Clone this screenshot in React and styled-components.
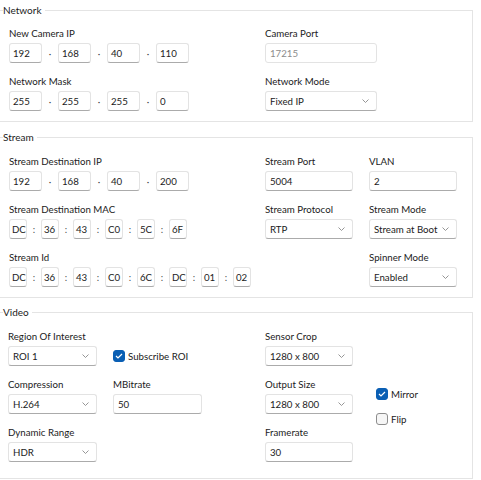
import React from 'react';
import styled, { createGlobalStyle } from 'styled-components';

const GlobalStyle = createGlobalStyle`
  html, body {
    margin: 0;
    padding: 0;
    background: #ffffff;
  }
  body {
    font-family: 'Lato', 'Open Sans', sans-serif;
    font-size: 9.7px;
    color: #1b1b1b;
    overflow: hidden;
  }
`;

const Page = styled.div`
  width: 481px;
  height: 480px;
  padding-top: 2px;
  box-sizing: border-box;
  overflow: hidden;
`;

const GroupBox = styled.fieldset`
  width: 474px;
  box-sizing: border-box;
  margin: 0 0 ${(p) => p.$gap ?? 7}px -1px;
  padding: 0;
  border: 1px solid #e4e4e4;
  min-width: 0;
`;

const Legend = styled.legend`
  margin-left: 3px;
  padding: 0 3px 0 0;
  font-size: 10px;
  line-height: 16px;
  color: #1b1b1b;
`;

const GroupBody = styled.div`
  display: grid;
  grid-template-columns: ${(p) => p.$cols};
  row-gap: 10px;
  padding: ${(p) => p.$pad};
`;

const Field = styled.div`
  display: flex;
  flex-direction: column;
  gap: 1px;
  grid-column: ${(p) => p.$col || 'auto'};
  grid-row: ${(p) => p.$row || 'auto'};
`;

const Label = styled.div`
  line-height: 17px;
  font-size: 9.7px;
  color: #1b1b1b;
  white-space: nowrap;
`;

const Box = styled.div`
  box-sizing: border-box;
  height: 20px;
  width: ${(p) => p.$w}px;
  flex: none;
  display: flex;
  align-items: center;
  padding: 0 0 0 ${(p) => p.$padL ?? 4}px;
  background: #ffffff;
  border: 1px solid #e3e3e3;
  border-bottom-color: ${(p) => (p.$disabled ? '#e3e3e3' : '#ababab')};
  border-radius: 3px;
  color: ${(p) => (p.$disabled ? '#8c8c8c' : '#1b1b1b')};
  font-size: 9.7px;
  white-space: nowrap;
  overflow: hidden;
`;

const ComboBox = styled(Box)`
  justify-content: space-between;
  padding-right: 7px;
`;

const Segments = styled.div`
  display: flex;
  align-items: center;
`;

const Sep = styled.span`
  width: ${(p) => p.$w}px;
  flex: none;
  text-align: center;
  color: #4a4a4a;
  font-size: 9.7px;
`;

const CheckCell = styled.div`
  grid-column: ${(p) => p.$col};
  grid-row: ${(p) => p.$row};
  align-self: ${(p) => p.$align || 'end'};
  display: flex;
  flex-direction: column;
  gap: 9px;
  padding-top: ${(p) => p.$padTop || 0}px;
  height: ${(p) => (p.$align === 'start' ? 'auto' : '20px')};
  justify-content: center;
`;

const CheckRow = styled.label`
  display: flex;
  align-items: center;
  gap: 3px;
  line-height: 16px;
  font-size: 9.7px;
  color: #1b1b1b;
`;

const CheckMark = styled.span`
  box-sizing: border-box;
  width: 12px;
  height: 12px;
  border-radius: 3px;
  display: flex;
  align-items: center;
  justify-content: center;
  background: ${(p) => (p.$on ? '#0a5fb4' : '#f6f6f6')};
  border: 1px solid ${(p) => (p.$on ? '#0a5fb4' : '#8d8d8d')};
`;

const Chevron = () => (
  <svg width="7" height="4" viewBox="0 0 7 4">
    <polyline points="0.5,0.5 3.5,3.5 6.5,0.5" fill="none" stroke="#8a8a8a" strokeWidth="0.9" />
  </svg>
);

const Tick = () => (
  <svg width="8" height="6" viewBox="0 0 8 6">
    <polyline points="1,3 3,5 7,1" fill="none" stroke="#ffffff" strokeWidth="1.2" />
  </svg>
);

function Combo({ value, w }) {
  return (
    <ComboBox $w={w}>
      <span>{value}</span>
      <Chevron />
    </ComboBox>
  );
}

function Check({ on, children }) {
  return (
    <CheckRow>
      <CheckMark $on={on}>{on && <Tick />}</CheckMark>
      {children}
    </CheckRow>
  );
}

function SegmentInput({ parts, sep, boxW, sepW, padL }) {
  return (
    <Segments>
      {parts.map((p, i) => (
        <React.Fragment key={i}>
          {i > 0 && <Sep $w={sepW}>{sep}</Sep>}
          <Box $w={boxW} $padL={padL}>{p}</Box>
        </React.Fragment>
      ))}
    </Segments>
  );
}

const Ip = ({ parts }) => <SegmentInput parts={parts} sep="·" boxW={33} sepW={16} padL={3} />;
const Mac = ({ parts }) => <SegmentInput parts={parts} sep=":" boxW={18} sepW={14} padL={2} />;

export default function App() {
  return (
    <Page>
      <GlobalStyle />

      <GroupBox>
        <Legend>Network</Legend>
        <GroupBody $cols="256px 112px" $pad="7px 0 10px 9px">
          <Field>
            <Label>New Camera IP</Label>
            <Ip parts={['192', '168', '40', '110']} />
          </Field>
          <Field>
            <Label>Camera Port</Label>
            <Box $w={112} $disabled>17215</Box>
          </Field>
          <Field>
            <Label>Network Mask</Label>
            <Ip parts={['255', '255', '255', '0']} />
          </Field>
          <Field>
            <Label>Network Mode</Label>
            <Combo w={112} value="Fixed IP" />
          </Field>
        </GroupBody>
      </GroupBox>

      <GroupBox $gap={6}>
        <Legend>Stream</Legend>
        <GroupBody $cols="256px 104px 88px" $pad="8px 0 10px 9px">
          <Field>
            <Label>Stream Destination IP</Label>
            <Ip parts={['192', '168', '40', '200']} />
          </Field>
          <Field>
            <Label>Stream Port</Label>
            <Box $w={88}>5004</Box>
          </Field>
          <Field>
            <Label>VLAN</Label>
            <Box $w={88}>2</Box>
          </Field>
          <Field>
            <Label>Stream Destination MAC</Label>
            <Mac parts={['DC', '36', '43', 'C0', '5C', '6F']} />
          </Field>
          <Field>
            <Label>Stream Protocol</Label>
            <Combo w={88} value="RTP" />
          </Field>
          <Field>
            <Label>Stream Mode</Label>
            <Combo w={88} value="Stream at Boot" />
          </Field>
          <Field>
            <Label>Stream Id</Label>
            <Mac parts={['DC', '36', '43', 'C0', '6C', 'DC', '01', '02']} />
          </Field>
          <Field $col="3">
            <Label>Spinner Mode</Label>
            <Combo w={88} value="Enabled" />
          </Field>
        </GroupBody>
      </GroupBox>

      <GroupBox $gap={0}>
        <Legend>Video</Legend>
        <GroupBody $cols="105px 152px 111px auto" $pad="8px 0 16px 8px">
          <Field $col="1" $row="1">
            <Label>Region Of Interest</Label>
            <Combo w={89} value="ROI 1" />
          </Field>
          <CheckCell $col="2" $row="1">
            <Check on>Subscribe ROI</Check>
          </CheckCell>
          <Field $col="3" $row="1">
            <Label>Sensor Crop</Label>
            <Combo w={88} value="1280 x 800" />
          </Field>
          <Field $col="1" $row="2">
            <Label>Compression</Label>
            <Combo w={89} value="H.264" />
          </Field>
          <Field $col="2" $row="2">
            <Label>MBitrate</Label>
            <Box $w={89}>50</Box>
          </Field>
          <Field $col="3" $row="2">
            <Label>Output Size</Label>
            <Combo w={88} value="1280 x 800" />
          </Field>
          <CheckCell $col="4" $row="2 / span 2" $align="start" $padTop={10}>
            <Check on>Mirror</Check>
            <Check>Flip</Check>
          </CheckCell>
          <Field $col="1" $row="3">
            <Label>Dynamic Range</Label>
            <Combo w={89} value="HDR" />
          </Field>
          <Field $col="3" $row="3">
            <Label>Framerate</Label>
            <Box $w={88}>30</Box>
          </Field>
        </GroupBody>
      </GroupBox>
    </Page>
  );
}
